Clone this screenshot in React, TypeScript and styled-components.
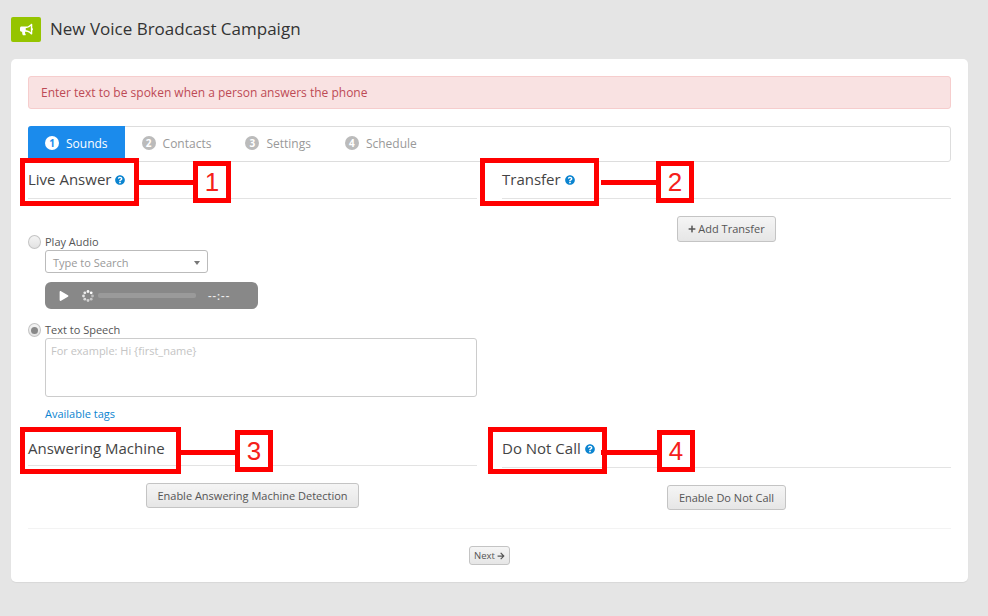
import styled, { createGlobalStyle } from 'styled-components';
import { FaArrowRight, FaBullhorn, FaPlay, FaPlus, FaQuestionCircle } from 'react-icons/fa';

const GlobalStyle = createGlobalStyle`
  html, body {
    margin: 0;
    background: #e5e5e5;
    font-family: 'Open Sans', 'Liberation Sans', sans-serif;
    color: #444;
  }
  * { box-sizing: border-box; }
`;

const Page = styled.div`
  width: 988px;
  height: 616px;
  padding: 17px 20px 0 11px;
  overflow: hidden;
`;

const Header = styled.header`
  display: flex;
  align-items: center;
  gap: 9px;
  height: 25px;
  margin-bottom: 17px;
`;

const LogoBadge = styled.div`
  width: 30px;
  height: 25px;
  background: #95c400;
  border-radius: 2px;
  color: #fff;
  display: flex;
  align-items: center;
  justify-content: center;
  font-size: 13px;
`;

const Title = styled.h1`
  margin: 0 0 3px;
  font-size: 17px;
  font-weight: 400;
  color: #333;
`;

const Card = styled.main`
  height: 523px;
  background: #fff;
  border-radius: 5px;
  padding: 17px;
  box-shadow: 0 1px 1px rgba(0, 0, 0, 0.06);
`;

const Alert = styled.div`
  height: 33px;
  margin-bottom: 17px;
  padding: 0 12px;
  display: flex;
  align-items: center;
  background: #f9e2e2;
  border: 1px solid #f6cdcd;
  border-radius: 3px;
  color: #bd4a55;
  font-size: 12px;
`;

const Tabs = styled.nav`
  height: 36px;
  display: flex;
  border: 1px solid #ddd;
  border-radius: 3px;
`;

const Tab = styled.div<{ $active?: boolean }>`
  display: flex;
  align-items: center;
  gap: 7px;
  margin: -1px 0 -1px ${p => (p.$active ? '-1px' : '0')};
  padding: 0 17px 2px;
  font-size: 12px;
  color: ${p => (p.$active ? '#fff' : '#999')};
  background: ${p => (p.$active ? '#1b8bec' : 'transparent')};
  border-radius: ${p => (p.$active ? '3px 0 0 0' : '0')};
`;

const TabNumber = styled.span<{ $active?: boolean }>`
  width: 14px;
  height: 14px;
  border-radius: 50%;
  display: flex;
  align-items: center;
  justify-content: center;
  font-size: 10px;
  font-weight: 700;
  background: ${p => (p.$active ? '#fff' : '#bbb')};
  color: ${p => (p.$active ? '#1b8bec' : '#fff')};
`;

const Row = styled.div`
  display: grid;
  grid-template-columns: 449px 449px;
  column-gap: 25px;
`;

const SectionHead = styled.div<{ $height: number; $flush?: boolean }>`
  position: relative;
  height: ${p => p.$height}px;
  display: flex;
  align-items: center;
  gap: 4px;
  padding-bottom: ${p => (p.$flush ? '0' : '2px')};
  border-bottom: 1px solid #e3e3e3;
`;

const HeadText = styled.h2`
  margin: 0;
  font-size: 15px;
  font-weight: 400;
  color: #444;
`;

const Help = styled(FaQuestionCircle)`
  color: #0b84d0;
  font-size: 10px;
  margin-top: 2px;
`;

const Frame = styled.div<{ $left: number; $top: number; $width: number; $height: number }>`
  position: absolute;
  left: ${p => p.$left}px;
  top: ${p => p.$top}px;
  width: ${p => p.$width}px;
  height: ${p => p.$height}px;
  border: 5px solid #f00;
`;

const Connector = styled.div<{ $left: number; $top: number; $width: number }>`
  position: absolute;
  left: ${p => p.$left}px;
  top: ${p => p.$top}px;
  width: ${p => p.$width}px;
  height: 5px;
  background: #f00;
`;

const NumberBox = styled.div<{ $left: number; $top: number }>`
  position: absolute;
  left: ${p => p.$left}px;
  top: ${p => p.$top}px;
  width: 38px;
  height: 42px;
  border: 5px solid #f00;
  background: #fff;
  display: flex;
  align-items: center;
  justify-content: center;
  font-family: 'Liberation Sans', Arial, sans-serif;
  font-size: 26px;
  color: #f5201a;
`;

const Body = styled.div`
  padding-top: 36px;
`;

const RadioRow = styled.label`
  display: flex;
  align-items: center;
  gap: 4px;
  height: 14px;
  font-size: 11px;
  color: #555;
`;

const RadioLabel = styled.span`
  margin-top: -2px;
`;

const Radio = styled.span<{ $checked?: boolean }>`
  width: 13px;
  height: 14px;
  border-radius: 50%;
  border: 1px solid #c4c4c4;
  background: linear-gradient(#f4f4f4, #e2e2e2);
  display: flex;
  align-items: center;
  justify-content: center;
  &::after {
    content: '';
    width: 7px;
    height: 7px;
    border-radius: 50%;
    background: ${p => (p.$checked ? '#888' : 'transparent')};
  }
`;

const Indented = styled.div`
  margin-left: 17px;
`;

const SelectBox = styled.div`
  width: 163px;
  height: 23px;
  margin-top: 1px;
  padding: 2px 7px 0;
  display: flex;
  align-items: center;
  justify-content: space-between;
  border: 1px solid #bbb;
  border-radius: 3px;
  font-size: 11px;
  color: #999;
`;

const Caret = styled.span`
  width: 0;
  height: 0;
  border-left: 3px solid transparent;
  border-right: 3px solid transparent;
  border-top: 4px solid #777;
`;

const Player = styled.div`
  width: 213px;
  height: 27px;
  margin: 9px 0 14px;
  padding: 0 14px;
  display: flex;
  align-items: center;
  background: #888;
  border-radius: 6px;
  color: #fff;
`;

const PlayIcon = styled(FaPlay)`
  font-size: 10px;
  margin-right: 13px;
`;

const Track = styled.div`
  width: 98px;
  height: 5px;
  margin: 0 12px 0 4px;
  background: #9a9a9a;
  border-radius: 2px;
`;

const Time = styled.span`
  font-size: 11px;
  font-weight: 600;
  letter-spacing: 1px;
  color: #eee;
`;

const TextArea = styled.div`
  width: 432px;
  height: 59px;
  margin-top: 1px;
  padding: 4px 5px;
  border: 1px solid #ccc;
  border-radius: 3px;
  font-size: 11px;
  color: #c4c4c4;
`;

const TagsLink = styled.a`
  display: block;
  margin: 9px 0 9px;
  height: 16px;
  font-size: 11px;
  color: #0b84d0;
`;

const Centered = styled.div<{ $top: number }>`
  display: flex;
  justify-content: center;
  padding-top: ${p => p.$top}px;
`;

const Button = styled.button<{ $height: number }>`
  height: ${p => p.$height}px;
  padding: 0 10.5px 1px;
  display: inline-flex;
  align-items: center;
  gap: 2px;
  font-family: inherit;
  font-size: 11px;
  color: #555;
  background: linear-gradient(#f5f5f5, #e6e6e6);
  border: 1px solid #c4c4c4;
  border-radius: 3px;
`;

const Divider = styled.hr`
  margin: 0;
  border: 0;
  border-top: 1px solid #f3f3f3;
`;

const NextButton = styled(Button)`
  padding: 0 4.5px;
  font-size: 9.5px;
`;

const Spinner = () => (
  <svg width="12" height="12" viewBox="0 0 12 12">
    {[0, 45, 90, 135, 180, 225, 270, 315].map((a, i) => (
      <circle
        key={a}
        cx={6 + 4.5 * Math.cos((a * Math.PI) / 180)}
        cy={6 + 4.5 * Math.sin((a * Math.PI) / 180)}
        r="1.4"
        fill="#fff"
        opacity={0.45 + i * 0.08}
      />
    ))}
  </svg>
);

const TABS = ['Sounds', 'Contacts', 'Settings', 'Schedule'];

function App() {
  return (
    <Page>
      <GlobalStyle />
      <Header>
        <LogoBadge>
          <FaBullhorn />
        </LogoBadge>
        <Title>New Voice Broadcast Campaign</Title>
      </Header>
      <Card>
        <Alert>Enter text to be spoken when a person answers the phone</Alert>
        <Tabs>
          {TABS.map((label, i) => (
            <Tab key={label} $active={i === 0}>
              <TabNumber $active={i === 0}>{i + 1}</TabNumber>
              {label}
            </Tab>
          ))}
        </Tabs>
        <Row>
          <div>
            <SectionHead $height={37}>
              <HeadText>Live Answer</HeadText>
              <Help />
              <Frame $left={-8} $top={-4} $width={119} $height={48} />
              <Connector $left={111} $top={18} $width={54} />
              <NumberBox $left={165} $top={-1}>1</NumberBox>
            </SectionHead>
            <Body>
              <RadioRow>
                <Radio />
                <RadioLabel>Play Audio</RadioLabel>
              </RadioRow>
              <Indented>
                <SelectBox>
                  Type to Search
                  <Caret />
                </SelectBox>
                <Player>
                  <PlayIcon />
                  <Spinner />
                  <Track />
                  <Time>--:--</Time>
                </Player>
              </Indented>
              <RadioRow>
                <Radio $checked />
                <RadioLabel>Text to Speech</RadioLabel>
              </RadioRow>
              <Indented>
                <TextArea>For example: Hi {'{first_name}'}</TextArea>
                <TagsLink>Available tags</TagsLink>
              </Indented>
            </Body>
          </div>
          <div>
            <SectionHead $height={37}>
              <HeadText>Transfer</HeadText>
              <Help />
              <Frame $left={-22} $top={-4} $width={119} $height={48} />
              <Connector $left={99} $top={18} $width={55} />
              <NumberBox $left={154} $top={-1}>2</NumberBox>
            </SectionHead>
            <Centered $top={17}>
              <Button $height={26}>
                <FaPlus size={8} />
                Add Transfer
              </Button>
            </Centered>
          </div>
        </Row>
        <Row>
          <div>
            <SectionHead $height={35} $flush>
              <HeadText>Answering Machine</HeadText>
              <Frame $left={-8} $top={-4} $width={161} $height={47} />
              <Connector $left={153} $top={19} $width={54} />
              <NumberBox $left={207} $top={-1}>3</NumberBox>
            </SectionHead>
            <Centered $top={17}>
              <Button $height={25}>Enable Answering Machine Detection</Button>
            </Centered>
          </div>
          <div>
            <SectionHead $height={37}>
              <HeadText>Do Not Call</HeadText>
              <Help />
              <Frame $left={-14} $top={-4} $width={119} $height={47} />
              <Connector $left={99} $top={19} $width={56} />
              <NumberBox $left={155} $top={-1}>4</NumberBox>
            </SectionHead>
            <Centered $top={17}>
              <Button $height={25}>Enable Do Not Call</Button>
            </Centered>
          </div>
        </Row>
        <Centered $top={18} />
        <Divider />
        <Centered $top={17}>
          <NextButton $height={19}>
            Next
            <FaArrowRight size={8} />
          </NextButton>
        </Centered>
      </Card>
    </Page>
  );
}

export default App;
